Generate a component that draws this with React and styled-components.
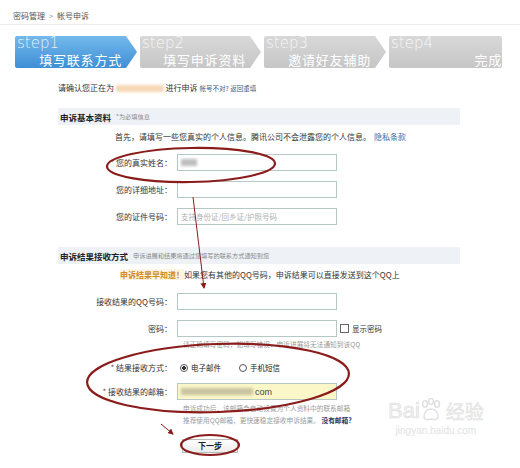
import React from "react";
import styled, { createGlobalStyle } from "styled-components";

const GlobalStyle = createGlobalStyle`
  html, body {
    margin: 0;
    padding: 0;
    background: #fff;
  }
  body {
    font-family: "Noto Sans CJK SC", "Noto Sans", sans-serif;
    color: #333;
  }
`;

const steps = [
  { no: "step1", title: "填写联系方式", width: 122, active: true },
  { no: "step2", title: "填写申诉资料", width: 121 },
  { no: "step3", title: "邀请好友辅助", width: 122 },
  { no: "step4", title: "完成", width: 113, last: true },
];

const App = () => {
  return (
    <Page>
      <GlobalStyle />
      <Breadcrumb>
        密码管理 <Sep>&gt;</Sep> 帐号申诉
      </Breadcrumb>

      <Steps>
        {steps.map((s) => (
          <Step key={s.no} $active={s.active} $last={s.last} style={{ width: s.width }}>
            <StepNo>{s.no}</StepNo>
            <StepTitle $last={s.last}>{s.title}</StepTitle>
          </Step>
        ))}
      </Steps>

      <Content>
        <Confirm>
          请确认您正在为 <Blur $w={48} $color="#f5d8b6" /> 进行申诉
          <SmallLink>帐号不对? 返回重填</SmallLink>
        </Confirm>

        <SectionHead>
          <SectionTitle>申诉基本资料</SectionTitle>
          <SectionNote>*为必填信息</SectionNote>
        </SectionHead>

        <Intro>
          首先，请填写一些您真实的个人信息。腾讯公司不会泄露您的个人信息。
          <Link>隐私条款</Link>
        </Intro>

        <Form $top={13}>
          <Label>
            <Star>*</Star> 您的真实姓名：
          </Label>
          <Field>
            <Blur $w={16} $color="#bdbdbd" />
          </Field>
          <Label>您的详细地址：</Label>
          <Field />
          <Label>您的证件号码：</Label>
          <Field>
            <Placeholder>支持身份证/回乡证/护照号码</Placeholder>
          </Field>
        </Form>

        <SectionHead $top={22}>
          <SectionTitle>申诉结果接收方式</SectionTitle>
          <SectionNote>申诉进展和结果将通过您填写的联系方式通知到您</SectionNote>
        </SectionHead>

        <Promo>
          <PromoTag>申诉结果早知道！</PromoTag>
          如果您有其他的QQ号码，申诉结果可以直接发送到这个QQ上
        </Promo>

        <Form $top={14}>
          <Label>接收结果的QQ号码：</Label>
          <Field />
          <Label>密码：</Label>
          <FieldRow>
            <Field />
            <Check>
              <Box /> 显示密码
            </Check>
          </FieldRow>
        </Form>

        <Hint $top={3}>请正确填写密码，如填写错误，申诉进展将无法通知到该QQ</Hint>

        <Form $top={14}>
          <Label>
            <Star>*</Star> 结果接收方式：
          </Label>
          <Radios>
            <Radio $on /> <RadioText>电子邮件</RadioText>
            <Radio /> <RadioText>手机短信</RadioText>
          </Radios>
        </Form>

        <Form $top={10}>
          <Label>
            <Star>*</Star> 接收结果的邮箱：
          </Label>
          <Field $mail>
            <Blur $w={72} $color="#c9c3a0" />
            <MailEnd>com</MailEnd>
          </Field>
        </Form>

        <Hint $top={2} $lh={12}>
          申诉成功后，该邮箱会自动设置为个人资料中的联系邮箱
          <br />
          推荐使用QQ邮箱，更快速稳定接收申诉结果。 <Strong>没有邮箱？</Strong>
        </Hint>

        <Actions>
          <NextButton>下一步</NextButton>
        </Actions>
      </Content>

      <Watermark>
        <Brand>
          Bai
          <svg width="22" height="24" viewBox="0 0 22 24">
            <g fill="none" stroke="#e2e2e2" strokeWidth="1.6">
              <ellipse cx="5" cy="6" rx="2.4" ry="3.2" />
              <ellipse cx="11" cy="3.5" rx="2.4" ry="3" />
              <ellipse cx="17" cy="6" rx="2.4" ry="3.2" />
              <path d="M4 19 C4 13 8 11 11 11 C14 11 18 13 18 19 C18 22 14 22 11 21 C8 22 4 22 4 19 Z" />
            </g>
          </svg>
          <BrandCn>经验</BrandCn>
        </Brand>
        <BrandUrl>jingyan.baidu.com</BrandUrl>
      </Watermark>

      <Marks width="520" height="468" viewBox="0 0 520 468">
        <defs>
          <marker id="head" markerWidth="6" markerHeight="6" refX="5" refY="3" orient="auto">
            <path d="M0 0 L6 3 L0 6 Z" fill="#8b1c1c" />
          </marker>
        </defs>
        <g fill="none" stroke="#8b1c1c" strokeWidth="2.2">
          <ellipse cx="191" cy="165" rx="84" ry="17" transform="rotate(-1 191 165)" />
          <ellipse cx="218" cy="378" rx="131" ry="34" transform="rotate(-2 218 378)" />
          <ellipse cx="210" cy="445" rx="29" ry="10" />
        </g>
        <g stroke="#8b1c1c" strokeWidth="1" fill="none">
          <path d="M193 197 L204 288" markerEnd="url(#head)" />
          <path d="M161 424 L173 434" markerEnd="url(#head)" />
        </g>
      </Marks>
    </Page>
  );
};

export default App;

const Page = styled.div`
  position: relative;
  width: 520px;
  height: 468px;
  overflow: hidden;
  background: #fff;
`;

const Breadcrumb = styled.div`
  box-sizing: border-box;
  height: 25px;
  padding: 12px 0 0 13px;
  font-size: 8px;
  line-height: 8px;
  color: #555;
  border-bottom: 1px solid #ececec;
`;

const Sep = styled.span`
  color: #999;
  margin: 0 2px;
`;

const Steps = styled.div`
  display: flex;
  gap: 3px;
  margin-top: 11px;
  padding-left: 15px;
`;

const Step = styled.div`
  box-sizing: border-box;
  height: 32px;
  display: flex;
  flex-direction: column;
  justify-content: space-between;
  padding: 1px ${(p) => (p.$last ? "1px" : "15px")} 1px 2px;
  border-radius: 2px;
  background: ${(p) =>
    p.$active
      ? "linear-gradient(#74b9ec, #3e8fd5)"
      : "linear-gradient(#d8d8d8, #c6c6c6)"};
  clip-path: ${(p) =>
    p.$last
      ? "none"
      : "polygon(0 0, calc(100% - 11px) 0, 100% 50%, calc(100% - 11px) 100%, 0 100%)"};
`;

const StepNo = styled.div`
  font-family: "DejaVu Sans", sans-serif;
  font-weight: 200;
  font-size: 15px;
  line-height: 13px;
  color: rgba(255, 255, 255, 0.85);
`;

const StepTitle = styled.div`
  align-self: flex-end;
  font-size: 13px;
  line-height: 14px;
  letter-spacing: 0.8px;
  color: #fff;
  margin-right: ${(p) => (p.$last ? "-1px" : "0")};
`;

const Content = styled.div`
  padding-left: 58px;
  width: 402px;
`;

const Confirm = styled.div`
  display: flex;
  align-items: center;
  margin-top: 16px;
  height: 8px;
  font-size: 8px;
  line-height: 8px;
  color: #333;
  white-space: pre;
`;

const Blur = styled.span`
  display: inline-block;
  width: ${(p) => p.$w}px;
  height: 7px;
  background: ${(p) => p.$color};
  filter: blur(1.5px);
`;

const SmallLink = styled.span`
  font-size: 6.5px;
  color: #3b5e8c;
  margin-left: 2px;
`;

const SectionHead = styled.div`
  display: flex;
  align-items: center;
  box-sizing: border-box;
  height: 17px;
  margin-top: ${(p) => p.$top ?? 16}px;
  padding-left: 2px;
  background: #eef1f5;
`;

const SectionTitle = styled.span`
  font-size: 8.5px;
  font-weight: 700;
  color: #222;
`;

const SectionNote = styled.span`
  margin-left: 5px;
  font-size: 6.2px;
  color: #8a8a8a;
`;

const Intro = styled.div`
  margin-top: 8px;
  padding-left: 57px;
  font-size: 8px;
  line-height: 8px;
  white-space: nowrap;
  color: #333;
`;

const Link = styled.span`
  margin-left: 3px;
  color: #3d6aa6;
`;

const Form = styled.div`
  display: grid;
  grid-template-columns: 116px auto;
  align-items: center;
  row-gap: 10px;
  margin-top: ${(p) => p.$top}px;
`;

const Label = styled.div`
  text-align: right;
  padding-right: 2px;
  font-size: 8px;
  color: #333;
  white-space: nowrap;
`;

const Star = styled.span`
  color: #555;
`;

const Field = styled.div`
  box-sizing: border-box;
  width: 160px;
  height: 17px;
  margin-left: 3px;
  display: flex;
  align-items: center;
  padding: 0 3px;
  border: 1px solid #b5c8c6;
  background: ${(p) => (p.$mail ? "#fbf7c8" : "#fff")};
`;

const Placeholder = styled.span`
  font-size: 7.5px;
  color: #b0b0b0;
  white-space: nowrap;
`;

const FieldRow = styled.div`
  display: flex;
  align-items: center;
`;

const Check = styled.span`
  display: flex;
  align-items: center;
  gap: 3px;
  margin-left: 3px;
  font-size: 7.5px;
  color: #333;
`;

const Box = styled.span`
  display: inline-block;
  width: 7px;
  height: 7px;
  border: 1px solid #666;
  background: #fff;
`;

const Promo = styled.div`
  margin-top: 6px;
  padding-left: 62px;
  font-size: 8px;
  line-height: 9px;
  color: #333;
  white-space: nowrap;
`;

const PromoTag = styled.span`
  color: #d08b24;
  background: #fdf4e2;
  font-weight: 700;
`;

const Hint = styled.div`
  margin-top: ${(p) => p.$top}px;
  padding-left: 125px;
  font-size: 6.7px;
  line-height: ${(p) => p.$lh ?? 8}px;
  color: #9c9c9c;
  white-space: nowrap;
`;

const Strong = styled.span`
  font-weight: 700;
  color: #1d3b68;
`;

const Radios = styled.div`
  display: flex;
  align-items: center;
  height: 10px;
  margin-left: 6px;
`;

const Radio = styled.span`
  box-sizing: border-box;
  width: 8px;
  height: 8px;
  border-radius: 50%;
  border: 1px solid #555;
  background: ${(p) =>
    p.$on ? "radial-gradient(#333 0 1.6px, #fff 2px)" : "#fff"};
`;

const RadioText = styled.span`
  font-size: 7.5px;
  color: #222;
  margin: 0 18px 0 3px;
`;

const MailEnd = styled.span`
  margin-left: 2px;
  font-family: "Liberation Sans", sans-serif;
  font-size: 9px;
  color: #444;
`;

const Actions = styled.div`
  display: flex;
  margin-top: 13px;
  padding-left: 124px;
`;

const NextButton = styled.button`
  box-sizing: border-box;
  width: 56px;
  height: 14px;
  padding: 0;
  font-family: "Noto Sans CJK SC", sans-serif;
  font-size: 8px;
  font-weight: 700;
  line-height: 12px;
  color: #222;
  border: 1px solid #b9b9b9;
  background: linear-gradient(#fff, #ececec);
`;

const Watermark = styled.div`
  position: absolute;
  left: 388px;
  top: 398px;
  display: flex;
  flex-direction: column;
  align-items: center;
`;

const Brand = styled.div`
  display: flex;
  align-items: flex-end;
  font-family: "Liberation Sans", sans-serif;
  font-size: 22px;
  line-height: 22px;
  color: #f0f0f0;
  -webkit-text-stroke: 0.6px #dedede;
`;

const BrandCn = styled.span`
  margin-left: 4px;
  font-family: "Noto Sans CJK SC", sans-serif;
  font-size: 19px;
  color: #f0f0f0;
  -webkit-text-stroke: 0.5px #dedede;
`;

const BrandUrl = styled.div`
  margin-top: 3px;
  font-family: "Liberation Sans", sans-serif;
  font-size: 10px;
  color: #e2e2e2;
`;

const Marks = styled.svg`
  position: absolute;
  left: 0;
  top: 0;
  pointer-events: none;
`;
